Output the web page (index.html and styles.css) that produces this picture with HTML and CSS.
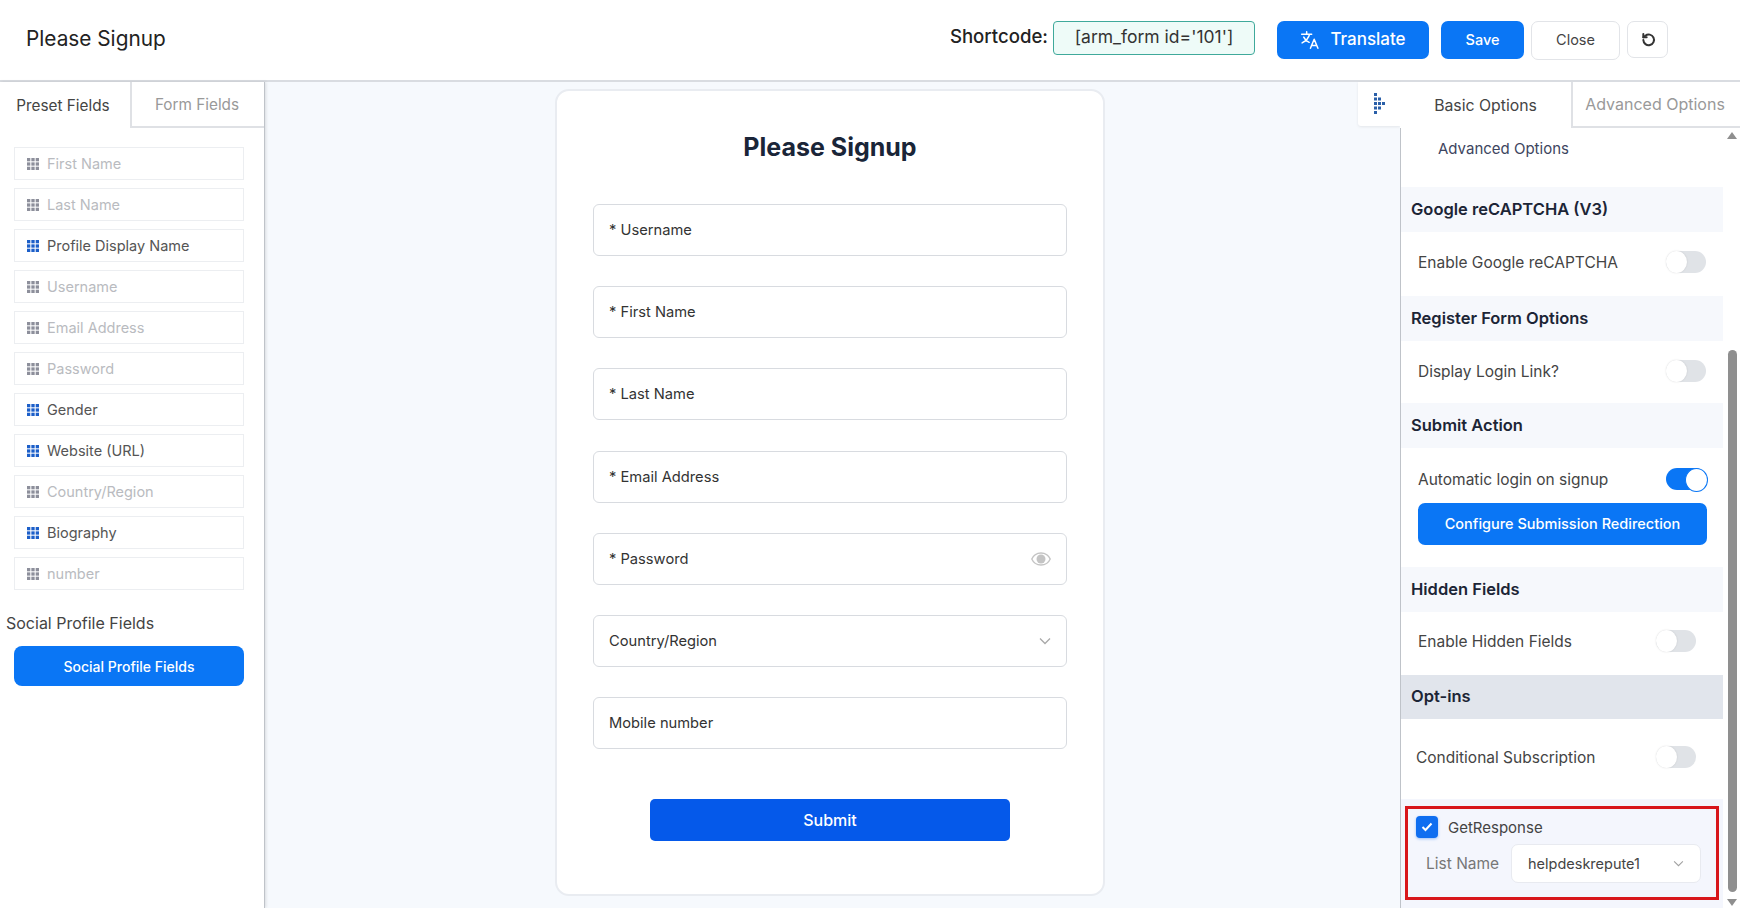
FILE: index.html

```html
<!DOCTYPE html>
<html lang="en">
<head>
  <meta charset="UTF-8" />
  <title>Please Signup</title>
  <link rel="stylesheet" href="styles.css">
</head>
<body>

<svg class="defs" width="0" height="0">
  <symbol id="grip" viewBox="0 0 12 12">
    <rect x="0" y="0" width="3.3" height="3.3"/><rect x="4.35" y="0" width="3.3" height="3.3"/><rect x="8.7" y="0" width="3.3" height="3.3"/>
    <rect x="0" y="4.35" width="3.3" height="3.3"/><rect x="4.35" y="4.35" width="3.3" height="3.3"/><rect x="8.7" y="4.35" width="3.3" height="3.3"/>
    <rect x="0" y="8.7" width="3.3" height="3.3"/><rect x="4.35" y="8.7" width="3.3" height="3.3"/><rect x="8.7" y="8.7" width="3.3" height="3.3"/>
  </symbol>
</svg>

<header class="topbar">
  <div class="page-title">Please Signup</div>
  <div class="shortcode-label">Shortcode:</div>
  <div class="shortcode">[arm_form id='101']</div>
  <button class="btn btn-translate">
    <svg width="20" height="20" viewBox="0 0 24 24" fill="none" stroke="#fff" stroke-width="1.8" stroke-linecap="round" stroke-linejoin="round"><path d="M2 5h12M8 2v3M11.5 5c-1 4.5-4 8-9 10.500M4.500 8.500c1.200 2.800 3.500 5 6.500 6.300"/><path d="M12.500 22l4.500-11 4.500 11M14 18.500h6"/></svg>
    <span class="btn-text">Translate</span>
  </button>
  <button class="btn btn-save"><span class="btn-text">Save</span></button>
  <button class="btn btn-close"><span class="btn-text">Close</span></button>
  <button class="btn btn-reset">
    <svg width="16" height="16" viewBox="0 0 24 24" fill="none" stroke="#333" stroke-width="3" stroke-linecap="round" stroke-linejoin="round"><path d="M5 12a8 8 0 1 0 3-6.500L5 8"/><path d="M5 3v5h5"/></svg>
  </button>
</header>

<main class="workspace">
  <aside class="left-panel">
    <div class="tabs">
      <div class="tab tab-active tab-preset">Preset Fields</div>
      <div class="tab tab-form">Form Fields</div>
    </div>
    <div class="field-list">
      <div class="field-item off"><svg class="grip"><use href="#grip"/></svg>First Name</div>
      <div class="field-item off"><svg class="grip"><use href="#grip"/></svg>Last Name</div>
      <div class="field-item"><svg class="grip"><use href="#grip"/></svg>Profile Display Name</div>
      <div class="field-item off"><svg class="grip"><use href="#grip"/></svg>Username</div>
      <div class="field-item off"><svg class="grip"><use href="#grip"/></svg>Email Address</div>
      <div class="field-item off"><svg class="grip"><use href="#grip"/></svg>Password</div>
      <div class="field-item"><svg class="grip"><use href="#grip"/></svg>Gender</div>
      <div class="field-item"><svg class="grip"><use href="#grip"/></svg>Website (URL)</div>
      <div class="field-item off"><svg class="grip"><use href="#grip"/></svg>Country/Region</div>
      <div class="field-item"><svg class="grip"><use href="#grip"/></svg>Biography</div>
      <div class="field-item off"><svg class="grip"><use href="#grip"/></svg>number</div>
    </div>
    <div class="social-title">Social Profile Fields</div>
    <button class="btn btn-social">Social Profile Fields</button>
  </aside>

  <section class="canvas">
    <div class="form-card">
      <h1 class="form-title">Please Signup</h1>
      <div class="form-input">* Username</div>
      <div class="form-input">* First Name</div>
      <div class="form-input">* Last Name</div>
      <div class="form-input">* Email Address</div>
      <div class="form-input">* Password
        <svg width="20" height="14" viewBox="0 0 20 14"><path d="M10 1C5.500 1 2 4 .8 7c1.200 3 4.700 6 9.200 6s8-3 9.200-6C18 4 14.500 1 10 1z" fill="none" stroke="#c4c4c4" stroke-width="1.400"/><circle cx="10" cy="7" r="4.500" fill="#c4c4c4"/></svg>
      </div>
      <div class="form-input">Country/Region
        <svg width="12" height="8" viewBox="0 0 12 8"><path d="M1 1.500l5 5 5-5" fill="none" stroke="#a9a9a9" stroke-width="1.300"/></svg>
      </div>
      <div class="form-input">Mobile number</div>
      <button class="btn btn-submit">Submit</button>
    </div>
  </section>

  <aside class="right-panel">
    <div class="drag-handle">
      <svg width="13" height="24" viewBox="0 0 13 24" fill="#2a5fa8">
        <rect x="1" y="1" width="3" height="3"/><rect x="1" y="5.500" width="3" height="3"/><rect x="1" y="10" width="3" height="3"/><rect x="1" y="14.500" width="3" height="3"/><rect x="1" y="19" width="3" height="3"/>
        <rect x="5" y="5.500" width="3" height="3"/><rect x="5" y="10" width="3" height="3"/><rect x="5" y="14.500" width="3" height="3"/>
        <rect x="9" y="10" width="3" height="3"/>
      </svg>
    </div>
    <div class="options">
      <div class="tabs">
        <div class="tab tab-active tab-basic">Basic Options</div>
        <div class="tab tab-advanced">Advanced Options</div>
      </div>
      <div class="options-body">
        <div class="sub-link">Advanced Options</div>

        <div class="opt-head">Google reCAPTCHA (V3)</div>
        <div class="opt-row">Enable Google reCAPTCHA<span class="toggle"></span></div>

        <div class="opt-head">Register Form Options</div>
        <div class="opt-row opt-row-login">Display Login Link?<span class="toggle"></span></div>

        <div class="opt-head">Submit Action</div>
        <div class="opt-row opt-row-tight">Automatic login on signup<span class="toggle toggle-on"></span></div>
        <button class="btn btn-config"><span class="btn-text">Configure Submission Redirection</span></button>

        <div class="opt-head">Hidden Fields</div>
        <div class="opt-row opt-row-short">Enable Hidden Fields<span class="toggle"></span></div>

        <div class="opt-head opt-head-dark">Opt-ins</div>
        <div class="opt-row opt-row-short opt-row-sub">Conditional Subscription<span class="toggle"></span></div>

        <div class="provider">
          <div class="provider-box">
            <label class="provider-check"><span class="checkbox">
              <svg width="12" height="10" viewBox="0 0 12 10"><path d="M1.500 5l3 3 6-6.500" fill="none" stroke="#fff" stroke-width="2"/></svg>
            </span>GetResponse</label>
            <div class="provider-list">
              <span class="list-label">List Name</span>
              <div class="list-select">helpdeskrepute1
                <svg width="11" height="7" viewBox="0 0 12 8"><path d="M1 1.500l5 5 5-5" fill="none" stroke="#a0a0a0" stroke-width="1.200"/></svg>
              </div>
            </div>
          </div>
        </div>
      </div>
      <div class="scroll-up"></div>
      <div class="scroll-thumb"></div>
      <div class="scroll-down"></div>
    </div>
  </aside>
</main>

</body>
</html>
```

FILE: styles.css

```css
* { box-sizing: border-box; }
html, body {
  margin: 0;
  height: 908px;
  overflow: hidden;
}
body {
  font-family: Inter, "Open Sans", sans-serif;
  font-size: 14.500px;
  color: #333;
  background-color: #fff;
}
.defs { position: absolute; }

.btn {
  font: inherit;
  border: none;
  cursor: pointer;
  display: flex;
  align-items: center;
  justify-content: center;
}
.btn-text { padding-bottom: 2px; }

/* top bar */
.topbar {
  height: 82px;
  display: flex;
  align-items: flex-start;
  padding: 21px 72px 0 26px;
  border-bottom: 2px solid #d9dce1;
  background-color: #fff;
}
.page-title {
  font-size: 20.800px;
  color: #222;
  margin-right: auto;
  padding-top: 5px;
}
.shortcode-label {
  font-size: 18.600px;
  font-weight: 500;
  color: #222;
  padding-top: 4px;
  margin-right: 5px;
}
.shortcode {
  width: 202px;
  height: 34px;
  background-color: #eefbf8;
  border: 1px solid #3fa99b;
  border-radius: 4px;
  font-size: 17.500px;
  color: #333;
  text-align: center;
  line-height: 29px;
  margin-right: 22px;
}
.btn-translate {
  width: 152px;
  height: 38px;
  gap: 10px;
  background-color: #0a76f5;
  color: #fff;
  font-size: 17px;
  font-weight: 500;
  border-radius: 7px;
  margin-right: 12px;
}
.btn-save {
  width: 83px;
  height: 38px;
  background-color: #0a76f5;
  color: #fff;
  font-weight: 500;
  border-radius: 7px;
  margin-right: 7px;
}
.btn-close {
  width: 89px;
  height: 39px;
  background-color: #fff;
  border: 1px solid #e2e4e8;
  border-radius: 7px;
  color: #444;
  margin-right: 7px;
}
.btn-reset {
  width: 41px;
  height: 37px;
  background-color: #fff;
  border: 1px solid #e2e4e8;
  border-radius: 7px;
}

/* main area */
.workspace {
  display: flex;
  height: 826px;
  background-color: #f6f9fd;
}

.tabs {
  display: flex;
  height: 46px;
}
.tab {
  display: flex;
  align-items: center;
  justify-content: center;
  font-size: 15.300px;
  background-color: #fff;
  color: #999;
  border-left: 2px solid #dfe1e5;
  border-bottom: 2px solid #dfe1e5;
}
.tab-active {
  color: #444;
  border: none;
}

/* left column */
.left-panel {
  width: 265px;
  flex-shrink: 0;
  background-color: #fff;
  border-right: 1px solid #bfc3c9;
  box-shadow: 1px 0 3px rgba(0,0,0,0.12);
}
.tab-preset { width: 130px; padding-right: 4px; }
.tab-form { width: 134px; padding-right: 2px; }
.field-list {
  display: flex;
  flex-direction: column;
  gap: 8px;
  padding: 19px 20px 0 14px;
}
.field-item {
  height: 33px;
  display: flex;
  align-items: center;
  gap: 8px;
  padding-left: 12px;
  border: 1px solid #eceef1;
  color: #555;
  font-size: 14.500px;
  background-color: #fff;
}
.field-item.off { color: #b9bbc0; }
.grip {
  width: 12px;
  height: 12px;
  fill: #1c5fc9;
}
.off .grip { fill: #8d8f9b; }
.social-title {
  font-size: 16px;
  color: #444;
  padding: 22px 0 0 6px;
  line-height: 22px;
}
.btn-social {
  width: 230px;
  height: 40px;
  margin: 12px 0 0 14px;
  background-color: #0a76f5;
  color: #fff;
  font-size: 14px;
  font-weight: 500;
  border-radius: 8px;
}

/* form preview */
.canvas {
  flex: 1;
  padding: 7px 0 0 290px;
}
.form-card {
  width: 550px;
  height: 807px;
  background-color: #fff;
  border: 2px solid #e9ecf1;
  border-radius: 14px;
  padding: 0 36px;
}
.form-title {
  margin: 0;
  height: 113px;
  text-align: center;
  font-size: 25px;
  font-weight: 700;
  line-height: 112px;
  color: #1a2538;
}
.form-input {
  height: 52px;
  margin-bottom: 30.200px;
  display: flex;
  align-items: center;
  justify-content: space-between;
  padding: 0 15px 0 15px;
  background-color: #fff;
  border: 1px solid #d8dbe0;
  border-radius: 6px;
  font-size: 14.700px;
  color: #333;
}
.btn-submit {
  width: 360px;
  height: 42px;
  margin: 50px 0 0 57px;
  background-color: #0559ea;
  color: #fff;
  font-size: 16px;
  font-weight: 500;
  border-radius: 5px;
}

/* right column */
.right-panel {
  width: 382px;
  flex-shrink: 0;
  display: flex;
  align-items: flex-start;
}
.drag-handle {
  width: 42px;
  height: 44px;
  background-color: #fff;
  display: flex;
  align-items: center;
  padding-left: 15px;
  border-radius: 0 0 0 3px;
  box-shadow: 0 1px 3px rgba(0,0,0,0.08);
}
.options {
  position: relative;
  width: 340px;
  height: 826px;
  overflow: hidden;
}
.tab-basic { width: 171px; font-size: 15.800px; }
.tab-advanced { width: 169px; font-size: 16px; padding-right: 3px; }
.options-body {
  width: 323px;
  height: 780px;
  background-color: #fff;
  border-left: 1px solid #bfc3c9;
  box-shadow: -1px 0 3px rgba(0,0,0,0.08);
}
.options::after {
  content: "";
  position: absolute;
  top: 46px;
  right: 0;
  width: 17px;
  height: 780px;
  background-color: #fff;
}
.sub-link {
  height: 59px;
  padding: 10px 0 0 37px;
  font-size: 15px;
  line-height: 22px;
  color: #3d4560;
}
.opt-head {
  height: 45px;
  display: flex;
  align-items: center;
  padding: 0 0 2px 10px;
  background-color: #f6f8fc;
  font-size: 16.500px;
  font-weight: 600;
  color: #1c2536;
}
.opt-head-dark { background-color: #e1e5ec; height: 44px; }
.opt-row {
  height: 64px;
  display: flex;
  align-items: center;
  justify-content: space-between;
  padding: 0 17px 4px 17px;
  font-size: 15.500px;
  color: #444;
}
.opt-row-login { height: 62px; padding-bottom: 2px; }
.opt-row-tight { height: 55px; padding: 7px 17px 0; }
.opt-row-short { height: 63px; padding-right: 27px; padding-bottom: 5px; }
.opt-row-sub { height: 80px; padding-left: 15px; padding-bottom: 4px; }
.toggle {
  position: relative;
  width: 40px;
  height: 22px;
  border-radius: 11px;
  background-color: #e0e3e7;
  flex-shrink: 0;
}
.toggle::after {
  content: "";
  position: absolute;
  left: 0;
  top: 0;
  width: 21px;
  height: 22px;
  border-radius: 50%;
  background-color: #fff;
  box-shadow: 0 0 2px rgba(0,0,0,0.12);
}
.toggle-on { background-color: #0a76f5; }
.toggle-on::after {
  left: 19px;
  box-shadow: none;
  border: 1px solid #0a76f5;
}
.btn-config {
  width: 289px;
  height: 42px;
  margin: 0 0 22px 17px;
  background-color: #0a76f5;
  color: #fff;
  font-size: 14.500px;
  font-weight: 500;
  border-radius: 7px;
}
.provider {
  height: 109px;
  padding: 7px 4px 0 4px;
  background-color: #f4f6fd;
}
.provider-box {
  height: 94px;
  border: 3px solid #d8161b;
  padding: 7px 0 0 8px;
}
.provider-check {
  display: flex;
  align-items: center;
  gap: 10px;
  font-size: 15px;
  color: #444;
}
.checkbox {
  width: 22px;
  height: 22px;
  border-radius: 4px;
  background-color: #0f6ef0;
  display: flex;
  align-items: center;
  justify-content: center;
  box-shadow: 0 1px 3px rgba(15,110,240,0.4);
}
.provider-list {
  display: flex;
  align-items: center;
  margin-top: 6px;
  padding-left: 10px;
}
.list-label {
  width: 85px;
  color: #777;
  font-size: 15.500px;
}
.list-select {
  width: 190px;
  height: 39px;
  display: flex;
  align-items: center;
  justify-content: space-between;
  padding: 0 16px;
  background-color: #fff;
  border: 1px solid #e8eaf0;
  border-radius: 7px;
  font-size: 14.500px;
  color: #444;
}

/* fake scrollbar */
.scroll-thumb {
  position: absolute;
  z-index: 1;
  top: 268px;
  right: 3px;
  width: 9px;
  height: 542px;
  border-radius: 5px;
  background-color: #8f8f8f;
}
.scroll-up, .scroll-down {
  position: absolute;
  z-index: 1;
  right: 3px;
  width: 0;
  height: 0;
  border-left: 5px solid transparent;
  border-right: 5px solid transparent;
}
.scroll-up {
  top: 50px;
  border-bottom: 7px solid #8f8f8f;
}
.scroll-down {
  top: 817px;
  border-top: 7px solid #8f8f8f;
}
```
